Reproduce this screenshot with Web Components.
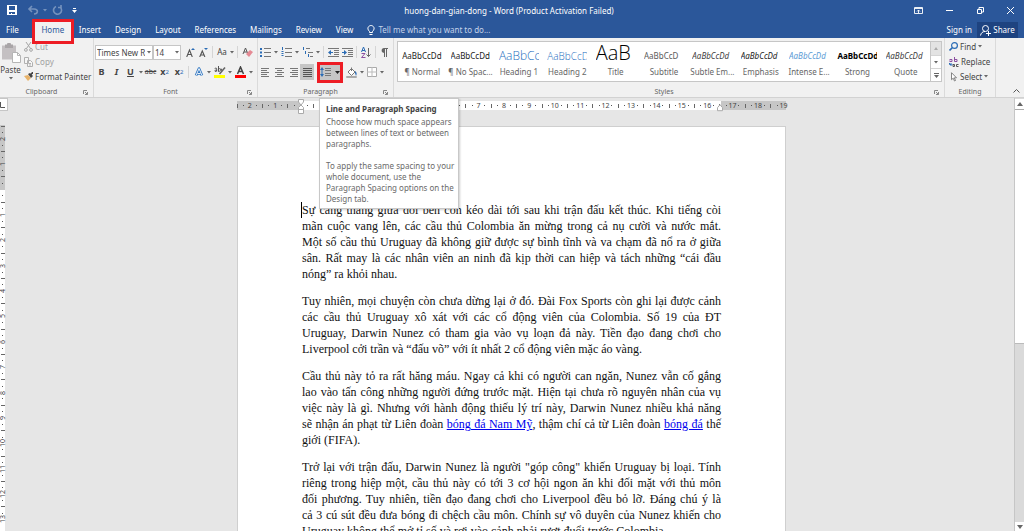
<!DOCTYPE html>
<html lang="vi">
<head>
<meta charset="utf-8">
<title>huong-dan-gian-dong - Word</title>
<style>
  html, body { margin: 0; height: 100%; }
  body { font: 8px/10px "Noto Sans", "Open Sans", sans-serif; color: #444; overflow: hidden; }
</style>
</head>
<body>
<word-app></word-app>

<template id="word-app">
  <style>
    :host { display: flex; flex-direction: column; height: 100vh; background: #e6e6e6; }
    doc-canvas { flex: 1; min-height: 0; }
    ribbon-panel { position: relative; z-index: 2; }
  </style>
  <title-bar>huong-dan-gian-dong - Word (Product Activation Failed)</title-bar>
  <tab-bar></tab-bar>
  <ribbon-panel></ribbon-panel>
  <doc-canvas></doc-canvas>
</template>

<template id="title-bar">
  <style>
    :host { display: grid; grid-template-columns: 1fr auto 1fr; align-items: center; height: 20px; background: #2b579a; color: #fff; }
    h1 { font: inherit; margin: 2px 6px 0 0; }
    div { display: flex; align-items: center; }
    .quick { padding-left: 4px; }
    .window { justify-content: flex-end; }
    button { all: unset; display: flex; justify-content: center; align-items: center; height: 20px; width: 16px; }
    .narrow { width: 8px; }
    .off { opacity: .35; }
    .gap { margin-left: 5px; }
    .window button { width: 31px; }
    .window button:last-child { width: 28px; }
  </style>
  <div class="quick">
    <button aria-label="Save"><w-icon name="save"></w-icon></button>
    <button class="off gap" aria-label="Undo"><w-icon name="undo"></w-icon></button>
    <button class="narrow off" aria-label="Undo list"><w-icon name="chevlight"></w-icon></button>
    <button class="off" aria-label="Redo"><w-icon name="redo"></w-icon></button>
    <button class="narrow gap" aria-label="Customize"><w-icon name="custom"></w-icon></button>
  </div>
  <h1><slot></slot></h1>
  <div class="window">
    <button aria-label="Ribbon display options"><w-icon name="display"></w-icon></button>
    <button aria-label="Minimize"><w-icon name="min"></w-icon></button>
    <button aria-label="Restore"><w-icon name="restore"></w-icon></button>
    <button aria-label="Close"><w-icon name="close"></w-icon></button>
  </div>
</template>

<template id="tab-bar">
  <style>
    :host { display: flex; height: 18px; background: #2b579a; color: #fff; position: relative; z-index: 3; }
    button { all: unset; box-sizing: border-box; display: flex; justify-content: center; align-items: center; height: 18px; padding-top: 2px; white-space: nowrap; }
    nav { display: flex; }
    nav button { padding-left: 7px; padding-right: 7px; }
    nav .file { padding-left: 6px; padding-right: 15px; }
    .on { background: #f1f1f1; color: #2b579a; position: relative; width: 38px; }
    .on::after { content: ""; position: absolute; inset: -1px -2px -6px; border: 3px solid #ed1c24; }
    .tell { gap: 3px; color: #c4d2e8; margin-left: 7px; }
    .right { margin-left: auto; display: flex; align-items: flex-end; }
    .right button { padding-right: 5px; }
    .right .share { background: #1e4380; padding: 0 3px; height: 16px; gap: 2px; width: 41px; margin-right: 6px; }
  </style>
  <nav>
    <button class="file">File</button><button class="on">Home</button><button>Insert</button><button>Design</button><button>Layout</button><button>References</button><button>Mailings</button><button>Review</button><button>View</button>
  </nav>
  <button class="tell"><w-icon name="bulb"></w-icon>Tell me what you want to do...</button>
  <div class="right">
    <button>Sign in</button>
    <button class="share"><w-icon name="person"></w-icon>Share</button>
  </div>
</template>

<template id="ribbon-panel">
  <style>
    :host { display: flex; height: 60px; box-sizing: border-box; background: #f1f1f1; border-bottom: 1px solid #d2d2d2; }
    .row { display: flex; align-items: center; height: 20px; }
    .sep { width: 1px; height: 12px; background: #d5d5d5; margin: 0 2px; }
    select { appearance: none; box-sizing: border-box; height: 15px; margin: 0; padding: 0 7px 0 1px; border: 1px solid #c6c6c6; border-radius: 0; background: #fff; font: 8px/13px "Noto Sans", sans-serif; color: #444; width: 100%; overflow: hidden; text-overflow: clip; }
    .box { display: flex; position: relative; width: 58px; margin-left: 1px; }
    .box.size { width: 28px; margin-left: 0; margin-right: 2px; }
    .box w-icon { position: absolute; right: 2px; top: 6px; }
    .clip { display: flex; width: 93px; }
    .stack { display: flex; flex-direction: column; }
    .clip .stack { margin-left: 3px; }
    .find { padding-left: 4px; width: 46px; }
    .clipboard, .editing { padding-top: 1px; }
    .editing { --label-gap: 0px; }
    .group-font { width: 164px; }
    .group-par { width: 136px; }
    .styles { flex: 1; min-width: 0; padding-top: 3px; }
    .collapse { width: 28px; display: flex; align-items: flex-end; justify-content: center; padding: 0 0 4px 12px; box-sizing: border-box; }
    sub, sup { font-size: 6px; line-height: 0; color: #2b6cb5; }
    b, i, u { font-size: 9px; }
    s { font-size: 7px; }
    .paste { all: unset; display: flex; flex-direction: column; align-items: center; width: 21px; padding-top: 4px; }
    .paste span { margin: 2px 0; }
    .spacing { position: relative; display: flex; margin: 0 2px 0 3px; }
    .spacing::after { content: ""; position: absolute; inset: -2px -1px -3px 0; border: 3px solid #ed1c24; }
    .spacing tool-tip { position: absolute; left: 2px; top: 34px; }
  </style>
  <ribbon-group label="Clipboard" launcher class="clipboard">
    <div class="clip">
      <button class="paste"><w-icon name="paste"></w-icon><span>Paste</span><w-icon name="chev"></w-icon></button>
      <div class="stack">
        <icon-label icon="cut" off>Cut</icon-label>
        <icon-label icon="copy" off>Copy</icon-label>
        <icon-label icon="painter">Format Painter</icon-label>
      </div>
    </div>
  </ribbon-group>
  <ribbon-group label="Font" launcher class="group-font">
    <div class="row">
      <div class="box"><select aria-label="Font"><option>Times New Roman</option></select><w-icon name="chev"></w-icon></div>
      <div class="box size"><select aria-label="Font size"><option>14</option></select><w-icon name="chev"></w-icon></div>
      <tool-button w="14" icon="grow" label="Grow font"></tool-button>
      <tool-button w="13" icon="shrink" label="Shrink font"></tool-button>
      <span class="sep"></span>
      <tool-button w="14" label="Change case">Aa</tool-button><tool-button w="6" icon="chev" label="Case list"></tool-button>
      <span class="sep"></span>
      <tool-button w="15" icon="clear" label="Clear formatting"></tool-button>
    </div>
    <div class="row">
      <tool-button w="15" label="Bold"><b>B</b></tool-button>
      <tool-button w="15" label="Italic"><b><i>I</i></b></tool-button>
      <tool-button w="13" label="Underline"><b><u>U</u></b></tool-button>
      <tool-button w="7" icon="chev" label="Underline list"></tool-button>
      <tool-button w="13" label="Strikethrough"><s>abc</s></tool-button>
      <tool-button w="15" label="Subscript"><b>x</b><sub>2</sub></tool-button>
      <tool-button w="14" label="Superscript"><b>x</b><sup>2</sup></tool-button>
      <span class="sep"></span>
      <tool-button w="15" icon="effects" label="Text effects"></tool-button><tool-button w="6" icon="chev" label="Effects list"></tool-button>
      <tool-button w="15" icon="highlight" label="Highlight"></tool-button><tool-button w="6" icon="chev" label="Highlight list"></tool-button>
      <tool-button w="15" icon="color" label="Font color"></tool-button><tool-button w="6" icon="chev" label="Color list"></tool-button>
    </div>
  </ribbon-group>
  <ribbon-group label="Paragraph" launcher class="group-par">
    <div class="row">
      <tool-button w="15" icon="bullets" label="Bullets"></tool-button><tool-button w="6" icon="chev" label="Bullet list"></tool-button>
      <tool-button w="15" icon="numbers" label="Numbering"></tool-button><tool-button w="6" icon="chev" label="Number list"></tool-button>
      <tool-button w="15" icon="levels" label="Multilevel list"></tool-button><tool-button w="6" icon="chev" label="Levels"></tool-button>
      <span class="sep"></span>
      <tool-button w="14" icon="outdent" label="Decrease indent"></tool-button>
      <tool-button w="14" icon="indent" label="Increase indent"></tool-button>
      <span class="sep"></span>
      <tool-button w="14" icon="sort" label="Sort"></tool-button>
      <span class="sep"></span>
      <tool-button w="12" icon="pilcrow" label="Show marks"></tool-button>
    </div>
    <div class="row">
      <tool-button w="14" icon="left" label="Align left"></tool-button>
      <tool-button w="14" icon="center" label="Center"></tool-button>
      <tool-button w="14" icon="right" label="Align right"></tool-button>
      <tool-button w="14" icon="justify" label="Justify" on></tool-button>
      <div class="spacing">
        <tool-button w="16" icon="spacing" label="Line and paragraph spacing" on></tool-button><tool-button w="9" icon="chevdark" label="Spacing list" on></tool-button>
        <tool-tip heading="Line and Paragraph Spacing">Choose how much space appears<br>between lines of text or between<br>paragraphs.<br><br>To apply the same spacing to your<br>whole document, use the<br>Paragraph Spacing options on the<br>Design tab.</tool-tip>
      </div>
      <tool-button w="15" icon="fill" label="Shading"></tool-button><tool-button w="6" icon="chev" label="Shading list"></tool-button>
      <tool-button w="14" icon="borders" label="Borders"></tool-button><tool-button w="6" icon="chev" label="Border list"></tool-button>
    </div>
  </ribbon-group>
  <ribbon-group label="Styles" launcher class="styles"><style-gallery></style-gallery></ribbon-group>
  <ribbon-group label="Editing" class="editing">
    <div class="stack find">
      <icon-label icon="find" chev>Find</icon-label>
      <icon-label icon="replace">Replace</icon-label>
      <icon-label icon="select" chev>Select</icon-label>
    </div>
  </ribbon-group>
  <div class="collapse"><w-icon name="collapse"></w-icon></div>
</template>

<template id="ribbon-group">
  <style>
    :host { display: flex; flex-direction: column; box-sizing: border-box; border-right: 1px solid #dadada; padding-top: 4px; background: #f1f1f1; }
    .body { flex: 1; min-height: 0; }
    footer { display: grid; grid-template-columns: 10px 1fr 10px; height: 10px; align-items: center; text-align: center; color: #666; font-size: 7px; }
    .name { padding-right: var(--label-gap, 10px); }
  </style>
  <div class="body"><slot></slot></div>
  <footer><i></i><span class="name"></span><w-icon hidden name="launch"></w-icon></footer>
</template>

<template id="tool-button">
  <style>
    :host { display: block; }
    button { all: unset; display: flex; justify-content: center; align-items: center; height: 16px; width: 100%; color: #444; white-space: nowrap; }
    :host([on]) button { background: #c6c6c6; }
  </style>
  <button><slot></slot></button>
</template>

<template id="icon-label">
  <style>
    :host { display: block; }
    button { all: unset; display: flex; align-items: center; gap: 2px; height: 15px; white-space: nowrap; }
    :host([off]) button { color: #a0a0a0; }
  </style>
  <button><slot></slot></button>
</template>

<template id="tool-tip">
  <style>
    :host { display: block; box-sizing: border-box; width: 140px; padding: 4px 6px 4px; background: #fff; border: 1px solid #c8c8c8; box-shadow: 1px 1px 2px #0003; font-size: 8px; line-height: 11px; color: #6a6a6a; white-space: nowrap; }
    h2 { margin: 0 0 2px; font-size: 8px; line-height: 11px; color: #444; }
  </style>
  <h2></h2>
  <slot></slot>
</template>

<template id="style-gallery">
  <style>
    :host { display: flex; box-sizing: border-box; height: 41px; margin: 0 2px 0 3px; border: 1px solid #c6c6c6; background: #fff; }
    .tiles { flex: 1; min-width: 0; display: grid; grid-template-columns: repeat(11, minmax(0, 1fr)); }
    .nav { display: grid; grid-template-rows: repeat(3, 1fr); width: 10px; border-left: 1px solid #c6c6c6; }
    .nav button { all: unset; display: flex; justify-content: center; align-items: center; border-top: 1px solid #d5d5d5; }
    .nav button:first-child { border: 0; background: #e3e3e3; }
  </style>
  <div class="tiles">
    <style-tile name="¶ Normal" kind="plain"></style-tile>
    <style-tile name="¶ No Spac..." kind="plain"></style-tile>
    <style-tile name="Heading 1" kind="h1"></style-tile>
    <style-tile name="Heading 2" kind="h2"></style-tile>
    <style-tile name="Title" kind="title"></style-tile>
    <style-tile name="Subtitle" kind="subtitle"></style-tile>
    <style-tile name="Subtle Em..." kind="subtle"></style-tile>
    <style-tile name="Emphasis" kind="emphasis"></style-tile>
    <style-tile name="Intense E..." kind="intense"></style-tile>
    <style-tile name="Strong" kind="strong"></style-tile>
    <style-tile name="Quote" kind="subtle"></style-tile>
  </div>
  <div class="nav">
    <button aria-label="Up"><w-icon name="up"></w-icon></button>
    <button aria-label="Down"><w-icon name="chev"></w-icon></button>
    <button aria-label="More"><w-icon name="custom2"></w-icon></button>
  </div>
</template>

<template id="style-tile">
  <style>
    :host { display: block; }
    button { all: unset; display: flex; flex-direction: column; align-items: center; width: 100%; height: 39px; }
    .sample { display: flex; align-items: center; width: 40px; height: 25px; overflow: hidden; white-space: nowrap; color: #222; line-height: 22px; padding-top: 3px; box-sizing: border-box; }
    .name { color: #666; white-space: nowrap; }
    .h1 { font: 300 12px/22px "Open Sans", sans-serif; color: #1f6fc0; }
    .h2 { font: 300 10px/22px "Open Sans", sans-serif; color: #1f6fc0; }
    .title { font: 300 20px/22px "Open Sans", sans-serif; color: #000; align-items: flex-start; padding: 0; }
    .subtitle { color: #5a5a5a; }
    .subtle, .emphasis, .intense { font-style: italic; }
    .subtle { color: #404040; }
    .intense { color: #5b9bd5; }
    .strong { font-weight: 700; color: #000; }
  </style>
  <button><span class="sample"></span><span class="name"></span></button>
</template>

<template id="doc-canvas">
  <style>
    :host { display: grid; grid-template-columns: 9px minmax(0, 1fr) 10px; grid-template-rows: minmax(0, 1fr); }
    .side { display: flex; flex-direction: column; overflow: hidden; }
    .corner { box-sizing: border-box; flex: none; height: 13px; width: 8px; background: #fff; border: 1px solid #c6c6c6; border-left: 0; margin-bottom: 14px; display: flex; align-items: center; }
    main { overflow: hidden; display: flex; flex-direction: column; align-items: center; }
    .top { width: 549px; padding: 3px 0 16px; }
    article { width: 549px; box-sizing: border-box; background: #fff; border: 1px solid #cfcfcf; padding: 75px 64px; flex: none; min-height: 700px; font: 12px/16px "Liberation Serif", serif; color: #111; }
    p { margin: 0 0 11px; text-align: justify; }
    p span { display: block; text-align-last: justify; }
    p span:last-child { text-align-last: left; }
    .caret { border-left: 1px solid #000; margin-left: -1px; }
    a { color: #00e; }
  </style>
  <div class="side">
    <div class="corner"><w-icon name="tabstop"></w-icon></div>
    <page-ruler vertical from="-2" to="13"></page-ruler>
  </div>
  <main>
    <div class="top"><page-ruler from="-2" to="19"></page-ruler></div>
    <article>
      <p><span class="caret">Sự căng thẳng giữa đôi bên còn kéo dài tới sau khi trận đấu kết thúc. Khi tiếng còi</span> <span>mãn cuộc vang lên, các cầu thủ Colombia ăn mừng trong cả nụ cười và nước mắt.</span> <span>Một số cầu thủ Uruguay đã không giữ được sự bình tĩnh và va chạm đã nổ ra ở giữa</span> <span>sân. Rất may là các nhân viên an ninh đã kịp thời can hiệp và tách những “cái đầu</span> <span>nóng” ra khỏi nhau.</span></p>
      <p><span>Tuy nhiên, mọi chuyện còn chưa dừng lại ở đó. Đài Fox Sports còn ghi lại được cảnh</span> <span>các cầu thủ Uruguay xô xát với các cổ động viên của Colombia. Số 19 của ĐT</span> <span>Uruguay, Darwin Nunez có tham gia vào vụ loạn đả này. Tiền đạo đang chơi cho</span> <span>Liverpool cởi trần và “đấu võ” với ít nhất 2 cổ động viên mặc áo vàng.</span></p>
      <p><span>Cầu thủ này tỏ ra rất hăng máu. Ngay cả khi có người can ngăn, Nunez vẫn cố gắng</span> <span>lao vào tấn công những người đứng trước mặt. Hiện tại chưa rõ nguyên nhân của vụ</span> <span>việc này là gì. Nhưng với hành động thiếu lý trí này, Darwin Nunez nhiều khả năng</span> <span>sẽ nhận án phạt từ Liên đoàn <a href="#nam-my">bóng đá Nam Mỹ</a>, thậm chí cả từ Liên đoàn <a href="#bong-da">bóng đá</a> thế</span> <span>giới (FIFA).</span></p>
      <p><span>Trở lại với trận đấu, Darwin Nunez là người "góp công" khiến Uruguay bị loại. Tính</span> <span>riêng trong hiệp một, cầu thủ này có tới 3 cơ hội ngon ăn khi đối mặt với thủ môn</span> <span>đối phương. Tuy nhiên, tiền đạo đang chơi cho Liverpool đều bỏ lỡ. Đáng chú ý là</span> <span>cả 3 cú sút đều đưa bóng đi chệch cầu môn. Chính sự vô duyên của Nunez khiến cho</span> <span>Uruguay không thể mở tỉ số và rơi vào cảnh phải rượt đuổi trước Colombia.</span></p>
    </article>
  </main>
  <scroll-bar></scroll-bar>
</template>

<template id="page-ruler">
  <style>
    :host { display: block; position: relative; height: 9px; color: #444; --edge: #c6c6c6;
      background: linear-gradient(90deg, var(--edge) 64px, #fff 64px, #fff 484px, var(--edge) 484px); }
    .scale { display: flex; width: 559px; margin-left: -3px; font-size: 7px; line-height: 9px; }
    .cm { flex: 1; min-width: 0; min-height: 0; display: grid; grid-template-columns: repeat(4, minmax(0, 1fr)); justify-items: center; align-items: center; height: 9px; }
    .tick { width: 1px; height: 4px; background: #666; }
    .dot { width: 1px; height: 1px; background: #555; }
    .num { display: flex; justify-content: center; align-items: center; }
    .cm:last-child .dot:last-child { visibility: hidden; }
    .mark { position: absolute; top: -2px; left: 60px; }
    .mark.end { left: 479px; top: 3px; }
    :host([vertical]) { width: 5px; height: 406px; flex: none; background: linear-gradient(var(--edge) 65px, #fff 65px); }
    :host([vertical]) .mark { display: none; }
    :host([vertical]) .scale { flex-direction: column; width: 5px; height: 406px; margin: 0; position: relative; top: -2px; }
    :host([vertical]) .cm { grid-template: repeat(4, minmax(0, 1fr)) / 5px; height: auto; }
    :host([vertical]) .num { writing-mode: vertical-rl; transform: rotate(180deg); line-height: 5px; width: 5px; }
    :host([vertical]) .tick { width: 4px; height: 1px; }
  </style>
  <div class="scale"></div>
  <w-icon class="mark" name="indentmark"></w-icon>
  <w-icon class="mark end" name="rightmark"></w-icon>
</template>

<template id="scroll-bar">
  <style>
    :host { display: flex; flex-direction: column; background: #dadada; border-left: 1px solid #c6c6c6; padding-top: 1px; }
    button { all: unset; display: flex; justify-content: center; align-items: center; height: 10px; background: #fff; border-bottom: 1px solid #ababab; }
    .thumb { height: 54%; background: #fff; border-bottom: 1px solid #bbb; }
    .down { margin-top: auto; height: 9px; border: 0; }
  </style>
  <button aria-label="Scroll up"><w-icon name="scrollup"></w-icon></button>
  <div class="thumb"></div>
  <button class="down" aria-label="Scroll down"><w-icon name="scrolldown"></w-icon></button>
</template>

<script>
const lines = (x, w, ys, c = '#777') => ys.map(y => `<path stroke="${c}" d="M${x} ${y}.5h${w}"/>`).join('');
/* name: [width, height, markup] */
const ICONS = {
  save: [10, 10, '<path fill="#fff" d="M0 0h10v10H0z"/><path fill="#2b579a" d="M2 1h6v4H2zM2 7h6v2H5V8H4v1H2z"/>'],
  undo: [12, 10, '<path fill="none" stroke="#fff" stroke-width="1.6" d="M2 4h5c5 0 4 5 0 5M5 1 2 4l3 3"/>'],
  redo: [11, 10, '<path fill="none" stroke="#fff" stroke-width="1.6" d="M8.5 2.500A4 4 0 1 1 4 1.500M6 2.500h3V0"/>'],
  custom: [5, 5, '<path fill="#fff" d="M1 0h3v1H1zM0 2h5L2.500 5z"/>'],
  custom2: [5, 5, '<path fill="#666" d="M0 0h5v1H0zM0 2h5L2.500 5z"/>'],
  chev: [4, 3, '<path fill="#666" d="M0 0h4L2 2.500z"/>'],
  chevlight: [4, 3, '<path fill="#fff" d="M0 0h4L2 2.500z"/>'],
  chevdark: [5, 3, '<path fill="#222" d="M0 0h5L2.500 3z"/>'],
  up: [4, 3, '<path fill="#aaa" d="M0 3h4L2 0z"/>'],
  scrollup: [6, 4, '<path fill="#666" d="M0 4h6L3 0z"/>'],
  scrolldown: [6, 4, '<path fill="#666" d="M0 0h6L3 4z"/>'],
  display: [9, 7, '<path fill="none" stroke="#fff" stroke-width=".9" d="M.5.5h8v6h-8zM.5 1.500h8M4.500 6V3M3 4.500 4.500 3 6 4.500"/>'],
  min: [7, 7, '<path stroke="#fff" d="M0 3.500h7"/>'],
  restore: [7, 7, '<path fill="none" stroke="#fff" d="M.5 2.500h4v4h-4zM2 2V.5h4.500V5H5"/>'],
  close: [7, 7, '<path stroke="#fff" d="m0 0 7 7M7 0 0 7"/>'],
  bulb: [8, 10, '<path fill="none" stroke="#fff" d="M2.500 6.500C-1 3 2 .5 4 .5S9 3 5.500 6.500v1h-3zM2.500 9.500h3"/>'],
  person: [11, 11, '<circle cx="5.500" cy="3.500" r="3" fill="none" stroke="#fff"/><path fill="none" stroke="#fff" d="M.5 10.500C1 8 2.500 6.500 5 6.500M6 8.500h5M8.500 6v5"/>'],
  paste: [20, 20, '<path fill="#c4c0c2" d="M1 2.500h14v14H1z"/><path fill="#a9a5a7" d="M4 1.500h2a2 2 0 0 1 4 0h2V5H4z"/><path fill="#fff" stroke="#b5b5b5" d="M11.500 9.500h5l3 3v7h-8z"/><path fill="none" stroke="#b5b5b5" d="M16.500 9.500v3h3"/>'],
  cut: [9, 10, '<path fill="none" stroke="#a5a5a5" d="m2 0 4.500 6.500M7 0 2.500 6.500"/><circle cx="1.900" cy="7.900" r="1.400" fill="none" stroke="#a5a5a5"/><circle cx="7" cy="7.900" r="1.400" fill="none" stroke="#a5a5a5"/>'],
  copy: [9, 10, '<path fill="#f6f6f6" stroke="#b0b0b0" d="M.5.5h4v6h-4zM3.500 3.500h3l2 2v4h-5z"/><path stroke="#b0b0b0" d="M5 6.500h2M5 8h2"/>'],
  painter: [9, 9, '<path fill="#e8b36a" d="M0 4 4 3l3 3-3 3z"/><path fill="#444" d="m4 2 2-1 3 3-2 2z"/><path stroke="#444" stroke-width="1.500" d="M6.500 3 9 0"/>'],
  grow: [9, 9, '<path fill="none" stroke="#555" stroke-width="1.100" d="M.7 9 3.500 2l2.800 7M1.700 6.500h3.600"/><path fill="#2b6cb5" d="M5 2h4L7 0z"/>'],
  shrink: [9, 9, '<path fill="none" stroke="#555" stroke-width="1.100" d="M.7 9 3.300 3l2.600 6M1.700 7h3.200"/><path fill="#2b6cb5" d="M5 0h4L7 2z"/>'],
  clear: [11, 10, '<path fill="none" stroke="#555" d="m1 7 2.500-6L6 7M2 5h3"/><path fill="#e58a94" d="m4 7 4-4 3 2-4 5z"/>'],
  effects: [10, 10, '<path fill="none" stroke="#2e75c0" stroke-width="2.600" stroke-linejoin="round" d="M2 8.500 5 1.500l3 7M3.500 6.500h3"/><path fill="none" stroke="#fff" stroke-width=".9" d="M2 8.500 5 1.500l3 7M3.500 6.500h3"/>'],
  highlight: [12, 12, '<path fill="#ff0" d="M0 9h11v3H0z"/><path fill="none" stroke="#444" stroke-width=".9" d="M.7 2.500c2-1 2 0 2 1v2M2.500 4C.5 4 .5 5.500 1.500 5.500s1-1 1-1M4.500 0v5.500M4.500 3c2.500-1.500 3 2.500 0 2.500M7 2.500 8 5"/><path stroke="#666" stroke-width="1.600" d="M5.500 8 11 1.500"/>'],
  color: [11, 12, '<path fill="#f00" d="M0 9h11v3H0z"/><path fill="none" stroke="#444" stroke-width="1.500" d="M2.500 8 5.500 1l3 7M3.500 5.500h4"/>'],
  bullets: [11, 10, lines(4, 7, [1, 5, 9]) + '<path fill="#2b6cb5" d="M0 1h2v2H0zM0 4.500h2v2H0zM0 8h2v2H0z"/>'],
  numbers: [11, 10, lines(4, 7, [1, 5, 9]) + '<path stroke="#2b6cb5" d="M1.500 0v3M.5 4.500h2M.5 6.500h2M.5 8.500h2"/>'],
  levels: [11, 10, lines(4, 4, [1]) + lines(6, 5, [5]) + lines(8, 3, [9]) + '<path stroke="#2b6cb5" d="M1.500 0v3M3.500 4v3M6.500 7v3"/>'],
  outdent: [11, 9, lines(0, 11, [0, 8]) + lines(6, 5, [2, 4, 6]) + '<path fill="#2b6cb5" d="m0 4.500 3-2.500v2h2v1H3v2z"/>'],
  indent: [11, 9, lines(0, 11, [0, 8]) + lines(6, 5, [2, 4, 6]) + '<path fill="#2b6cb5" d="M5 4.500 2 2v2H0v1h2v2z"/>'],
  sort: [10, 11, '<path fill="none" stroke="#2b6cb5" d="m.5 5 2-5 2 5M1 3.500h3"/><path fill="none" stroke="#8b4fa0" d="M.5 6.500h3.500L.5 10.500H4.500"/><path fill="none" stroke="#666" d="M7.500 1v8.500M5.500 7.500l2 2 2-2"/>'],
  pilcrow: [7, 9, '<path fill="#666" d="M3 0h4v1H3.500v4C-.5 5 0 0 3 0z"/><path stroke="#666" d="M3.500 0v9M5.500 0v9"/>'],
  left: [9, 9, lines(0, 8, [0, 4, 8]) + lines(0, 6, [2, 6])],
  center: [9, 9, lines(0, 9, [0, 4, 8]) + lines(2, 5, [2, 6])],
  right: [9, 9, lines(1, 8, [0, 4, 8]) + lines(3, 6, [2, 6])],
  justify: [9, 9, lines(0, 9, [0, 2, 4, 6, 8], '#555')],
  spacing: [11, 10, lines(5, 6, [1, 3, 6, 8]) + '<path fill="#2b6cb5" d="M2 0l2 3H0zM2 10l2-3H0z"/><path stroke="#2b6cb5" d="M2 2v6"/>'],
  fill: [12, 11, '<path fill="#fff" stroke="#777" d="m2 5 3.500-3.500L9 5 5.500 8.500zM5.500 4V.5"/><path fill="#2b6cb5" d="M9 4c2 1 2 3 1 5L9 6z"/><path fill="#fff" stroke="#aaa" d="M.5 9.500h10v1H.5z"/>'],
  borders: [10, 10, '<path fill="#fff" stroke="#aaa" d="M.5.5h9v9h-9z"/><path stroke="#bbb" d="M5 0v10M0 5h10"/>'],
  find: [9, 9, '<circle cx="5.500" cy="3.500" r="2.900" fill="none" stroke="#2b6cb5" stroke-width="1.200"/><path stroke="#2b6cb5" stroke-width="1.600" d="M3.500 5.500.5 8.500"/>'],
  replace: [10, 10, '<path fill="none" stroke="#8b4fa0" d="M.5 2.500H3v2H.8V3.500M5.500 0v4.500H8v-2H5.500"/><path fill="none" stroke="#555" d="M4 7.500h1.500v2H4zM9.500 7.500H7.500v2h2"/><path fill="none" stroke="#2b6cb5" d="M.5 6v1.500h2M1.500 6l1.500 1.500L1.500 9"/>'],
  select: [9, 10, '<path fill="#fff" stroke="#777" stroke-width=".9" d="M2.500.7v7l1.700-1.500L5.500 9l1-.5-1.200-2.700h2.200z"/>'],
  launch: [5, 5, '<path fill="none" stroke="#888" d="M.5 4V.5H4M2 2l2.500 2.500M4.500 2v2.500H2"/>'],
  collapse: [7, 4, '<path fill="none" stroke="#555" d="M.5 3.500l3-3 3 3"/>'],
  tabstop: [5, 6, '<path fill="none" stroke="#555" d="M.5 0v5.500H5"/>'],
  indentmark: [8, 15, '<path fill="#fff" stroke="#aaa" d="M1.500.5h5V3L4 6 1.500 3zM4 6l2.500 2.500V14.500h-5V8.500zM1.500 10.500h5"/>'],
  rightmark: [8, 8, '<path fill="#fff" stroke="#aaa" d="m4 .7 2.500 3v3h-5v-3z"/>']
};

const makeIcon = name => {
  const icon = document.createElement('w-icon');
  icon.setAttribute('name', name);
  return icon;
};

class Base extends HTMLElement {
  connectedCallback() {
    if (this.shadowRoot) return;
    this.attachShadow({ mode: 'open' }).append(document.getElementById(this.localName).content.cloneNode(true));
    this.fill(this.shadowRoot);
  }
  fill() {}
}
customElements.define('w-icon', class extends HTMLElement {
  connectedCallback() {
    if (this.shadowRoot) return;
    const [w, h, body] = ICONS[this.getAttribute('name')];
    this.attachShadow({ mode: 'open' }).innerHTML =
      `<style>:host{display:block;flex:none;width:${w}px;height:${h}px}:host([hidden]){display:none}svg{display:block}</style><svg width="${w}" height="${h}" viewBox="0 0 ${w} ${h}" aria-hidden="true">${body}</svg>`;
  }
});
customElements.define('tool-button', class extends Base {
  fill(root) {
    this.style.width = this.getAttribute('w') + 'px';
    const button = root.querySelector('button');
    button.setAttribute('aria-label', this.getAttribute('label'));
    if (this.hasAttribute('icon')) button.replaceChildren(makeIcon(this.getAttribute('icon')));
  }
});
customElements.define('icon-label', class extends Base {
  fill(root) {
    const button = root.querySelector('button');
    button.prepend(makeIcon(this.getAttribute('icon')));
    if (this.hasAttribute('chev')) button.append(makeIcon('chev'));
  }
});
customElements.define('ribbon-group', class extends Base {
  fill(root) {
    root.querySelector('.name').textContent = this.getAttribute('label');
    root.querySelector('w-icon').hidden = !this.hasAttribute('launcher');
  }
});
customElements.define('tool-tip', class extends Base {
  fill(root) { root.querySelector('h2').textContent = this.getAttribute('heading'); }
});
customElements.define('style-tile', class extends Base {
  fill(root) {
    const kind = this.getAttribute('kind');
    const sample = root.querySelector('.sample');
    sample.classList.add(kind);
    sample.textContent = { title: 'AaB', h1: 'AaBbCc', h2: 'AaBbCcD', subtitle: 'AaBbCcD' }[kind] || 'AaBbCcDd';
    root.querySelector('.name').textContent = this.getAttribute('name');
  }
});
customElements.define('page-ruler', class extends Base {
  fill(root) {
    const scale = root.querySelector('.scale');
    for (let n = +this.getAttribute('from'); n <= +this.getAttribute('to'); n++) {
      const cm = document.createElement('div');
      cm.className = 'cm';
      cm.innerHTML = `<i class="tick"></i><i class="dot"></i><span class="num">${n ? Math.abs(n) : ''}</span><i class="dot"></i>`;
      scale.append(cm);
    }
  }
});
for (const name of ['style-gallery', 'scroll-bar', 'title-bar', 'tab-bar', 'ribbon-panel', 'doc-canvas', 'word-app'])
  customElements.define(name, class extends Base {});
</script>
</body>
</html>
